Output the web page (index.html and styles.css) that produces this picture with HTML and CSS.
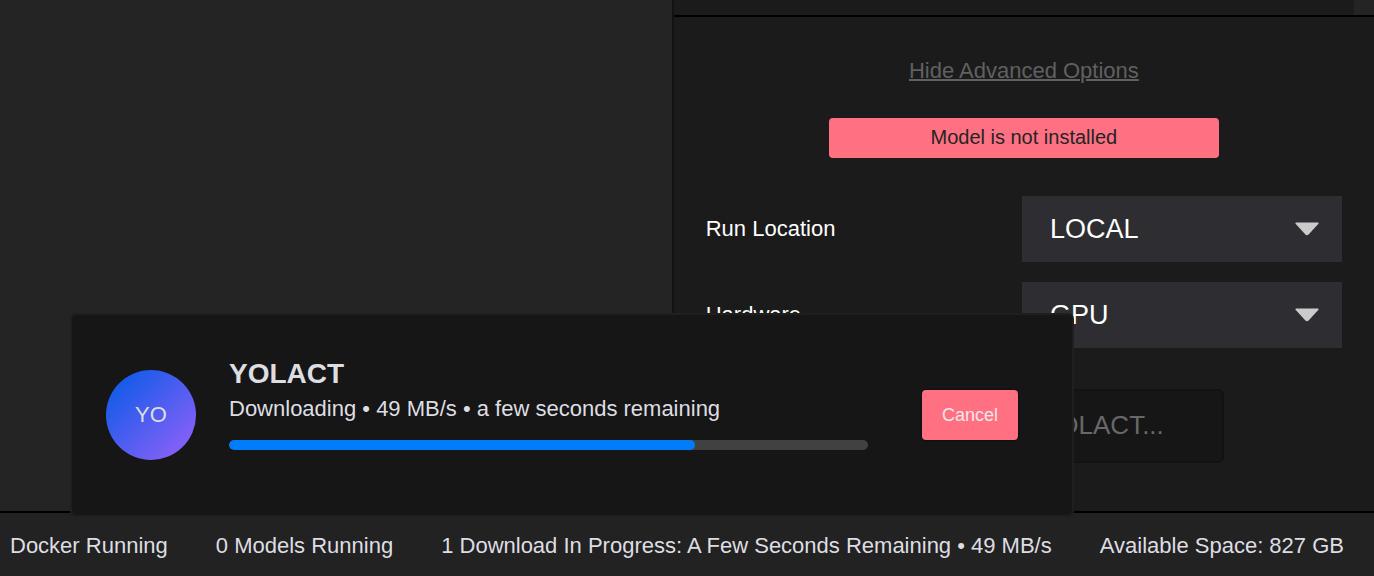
FILE: index.html
```html
<!DOCTYPE html>
<html lang="en">
<head>
<meta charset="utf-8">
<title>YOLACT</title>
<link rel="stylesheet" href="styles.css">
</head>
<body>
<div class="app">
  <div class="workspace">
    <main class="preview"></main>
    <aside class="panel">
      <div class="panel-top"><div class="scroll-track"></div></div>
      <form class="options">
        <a class="toggle" href="#">Hide Advanced Options</a>
        <p class="alert">Model is not installed</p>
        <div class="fields">
          <div class="field">
            <label for="location">Run Location</label>
            <div class="dropdown">
              <select id="location"><option>LOCAL</option></select>
              <svg class="caret" viewBox="0 0 24 14" aria-hidden="true"><path d="M1.2 0.5H22.8Q24.2 0.8 23.2 2L13.6 12.4Q12 14 10.4 12.4L0.8 2Q-0.2 0.8 1.2 0.5Z"/></svg>
            </div>
          </div>
          <div class="field">
            <label for="hardware">Hardware</label>
            <div class="dropdown">
              <select id="hardware"><option>GPU</option></select>
              <svg class="caret" viewBox="0 0 24 14" aria-hidden="true"><path d="M1.2 0.5H22.8Q24.2 0.8 23.2 2L13.6 12.4Q12 14 10.4 12.4L0.8 2Q-0.2 0.8 1.2 0.5Z"/></svg>
            </div>
          </div>
        </div>
        <button class="install" type="button" disabled>Downloading YOLACT...</button>
      </form>
    </aside>
  </div>
  <footer class="status">
    <span>Docker Running</span>
    <span>0 Models Running</span>
    <span>1 Download In Progress: A Few Seconds Remaining • 49 MB/s</span>
    <span>Available Space: 827 GB</span>
  </footer>
  <section class="toast">
    <div class="avatar">YO</div>
    <div class="download">
      <h2>YOLACT</h2>
      <p>Downloading • 49 MB/s • a few seconds remaining</p>
      <div class="track"><div class="fill" style="width: 73%"></div></div>
    </div>
    <button class="cancel" type="button">Cancel</button>
  </section>
</div>
</body>
</html>
```
FILE: styles.css
```css
* {
  box-sizing: border-box;
}

body {
  margin: 0;
  background: #242424;
  color: #fff;
  font-family: "Liberation Sans", Arial, sans-serif;
  font-size: 22px;
  line-height: 26px;
}

h2,
p {
  margin: 0;
}

button,
select {
  font-family: inherit;
}

.app {
  position: relative;
  display: flex;
  flex-direction: column;
  min-height: 100vh;
}

.workspace {
  flex: 1;
  display: grid;
  grid-template-columns: 22fr 23fr;
}

.preview {
  background: #242424;
}

.panel {
  border-left: 2px solid #121212;
  background: #1b1b1b;
}

.panel-top {
  display: flex;
  justify-content: flex-end;
  height: 17px;
  border-bottom: 2px solid #000;
}

.scroll-track {
  width: 20px;
  background: #242424;
}

.options {
  display: flex;
  flex-direction: column;
  align-items: center;
  padding: 41px 32px 48px;
}

.toggle {
  color: #606060;
  text-decoration-thickness: 2px;
}

.alert {
  width: 100%;
  max-width: 390px;
  margin-top: 34px;
  padding: 6px 0 8px;
  border-radius: 4px;
  background: #ff7182;
  color: #242424;
  font-size: 20px;
  text-align: center;
}

.fields {
  display: grid;
  gap: 20px;
  width: 100%;
  margin-top: 38px;
}

.field {
  display: grid;
  grid-template-columns: 1fr 320px;
  align-items: center;
}

.dropdown {
  display: grid;
  align-items: center;
}

.dropdown > * {
  grid-area: 1 / 1;
}

.dropdown select {
  width: 100%;
  padding: 17px 28px;
  border: 0;
  border-radius: 0;
  appearance: none;
  background: #2e2d32;
  color: #fff;
  font-size: 27px;
  line-height: 32px;
}

.caret {
  justify-self: end;
  width: 24px;
  height: 14px;
  margin-right: 23px;
  fill: #cbcbcb;
  pointer-events: none;
}

.install {
  width: 100%;
  max-width: 400px;
  margin-top: 41px;
  padding: 18px 0 20px;
  border: 2px solid #121212;
  border-radius: 6px;
  background: #161616;
  color: #686868;
  font-size: 26px;
  line-height: 32px;
}

.status {
  display: flex;
  justify-content: space-between;
  padding: 20px 30px 17px 10px;
  border-top: 2px solid #000;
  background: #222;
  color: #dedee2;
}

.toast {
  position: absolute;
  bottom: 59px;
  left: 70px;
  right: 300px;
  display: flex;
  align-items: center;
  padding: 43px 54px 43px 34px;
  border: 2px solid #1f1f1f;
  border-radius: 6px;
  background: #161616;
  color: #dedee2;
}

.avatar {
  flex: none;
  width: 90px;
  height: 90px;
  border-radius: 50%;
  background: linear-gradient(135deg, #005ae6, #9a61fa);
  line-height: 90px;
  text-align: center;
}

.download {
  flex: 1;
  margin: 0 54px 0 33px;
}

.download h2 {
  font-size: 28px;
  line-height: 32px;
}

.download p {
  margin-top: 6px;
}

.track {
  height: 10px;
  margin: 18px 0 22px;
  overflow: hidden;
  border-radius: 5px;
  background: #414141;
}

.fill {
  height: 100%;
  border-radius: 5px;
  background: #007dfa;
}

.cancel {
  padding: 13px 20px;
  border: 0;
  border-radius: 4px;
  background: #ff7182;
  box-shadow: 0 0 2px #000;
  color: #f2e6ea;
  font-size: 18px;
  line-height: 24px;
}
```
